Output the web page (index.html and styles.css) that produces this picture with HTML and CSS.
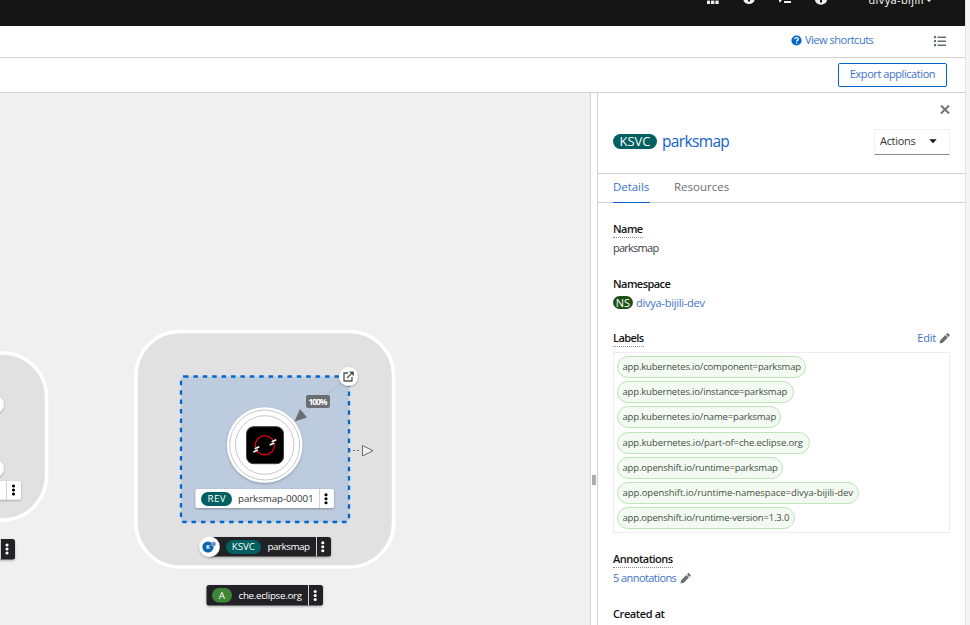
FILE: index.html
```html
<!DOCTYPE html>
<html lang="en">
<head>
<meta charset="utf-8">
<title>Topology</title>
<link rel="stylesheet" href="styles.css">
</head>
<body>
<div class="app">
  <div class="page">
    <header class="masthead">
      <svg class="masthead-icons" width="265" height="26" viewBox="700 0 265 26">
        <g fill="#f0f0f0">
          <path d="M707 0h3v4h-3zM711 0h3.400v4H711zM715.400 0h3.300v4h-3.300z"/>
          <path d="M743.500 0h11a5.500 4 0 0 1-11 0z"/>
          <path d="M779 0h3l-2 2.500-1-.8zM784 1h7v2h-7z"/>
          <path d="M815 0h12a6 4.700 0 0 1-12 0z"/>
          <path d="M927 0h4l-2 2z"/>
        </g>
        <path d="M707 .5h12" stroke="#151515" stroke-width=".6"/>
        <path d="M749 0v1.500M821 0v2.500" stroke="#151515" stroke-width="2"/>
        <text x="868.500" y="3.500" textLength="55" class="user">divya-bijili</text>
      </svg>
    </header>
    <div class="bar bar-shortcuts">
      <a class="link shortcuts"><svg width="11" height="11" viewBox="0 0 11 11"><circle cx="5.500" cy="5.500" r="5.100" fill="#06c"/><path d="M3.700 4.200c.2-2 3.600-2 3.600 0 0 1.200-1.700 1.200-1.700 2.400M5.600 7.500v1.300" fill="none" stroke="#fff" stroke-width="1.300"/></svg><span>View shortcuts</span></a>
      <svg class="list-icon" width="12" height="11" viewBox="0 0 12 11"><path d="M0 0h2v2.300H0zM0 4h2v2.300H0zM0 8h2v2.300H0zM3.500.5H12V2H3.500zM3.500 4.500H12V6H3.500zM3.500 8.500H12V10H3.500z" fill="#6a6e73"/></svg>
    </div>
    <div class="bar bar-export"><button class="export">Export application</button></div>
    <main class="content">
      <svg class="canvas" width="590" height="532" viewBox="0 93 590 532">
        <defs>
          <filter id="shadow" x="-20%" y="-20%" width="140%" height="150%"><feDropShadow dx="0" dy="1" stdDeviation="1" flood-color="#030303" flood-opacity=".3"/></filter>
          <g id="kebab"><circle cy="-4" r="1.550"/><circle r="1.550"/><circle cy="4" r="1.550"/></g>
        </defs>
        <rect x="-110" y="353" width="156.500" height="167" rx="44" class="group"/>
        <g filter="url(#shadow)" fill="#fff">
          <circle cx="-5" cy="404.500" r="9"/><circle cx="-5" cy="468.500" r="9"/>
          <rect x="-80" y="481" width="101" height="18.500" rx="2"/>
        </g>
        <path d="M6.500 481v18.500" stroke="#d2d2d2"/>
        <use href="#kebab" x="13.500" y="490"/>
        <g filter="url(#shadow)"><rect x="-80" y="539" width="95" height="20.500" rx="2.500" fill="#212427"/></g>
        <path d="M.5 539v20.500" stroke="#d2d2d2"/>
        <use href="#kebab" x="7" y="549" fill="#fff"/>

        <rect x="136" y="331.500" width="257.500" height="235.500" rx="44" class="group"/>
        <rect x="181" y="376.500" width="168" height="145.500" rx="3" class="service"/>
        <path d="M341 383L302 415" stroke="#b8bbbe"/>
        <path d="M294.500 421.500L300 409l7 8.500z" fill="#6a6e73"/>
        <rect x="306" y="395" width="24" height="13" rx="2" fill="#6a6e73"/>
        <text x="308.500" y="405" textLength="19" class="percent">100%</text>
        <circle cx="348.500" cy="376.500" r="9.500" fill="#fff" filter="url(#shadow)"/>
        <path d="M348 373h-4v8h8v-4M347 378l5.500-5.500" fill="none" stroke="#4f5255" stroke-width="1.300"/><path d="M349 371.500h4.800v4.800z" fill="#4f5255"/>
        <path d="M349 450.500h12" stroke="#6a6e73" stroke-dasharray="2 2"/>
        <path d="M362.500 445.500v10.500l10.500-5.300z" fill="#f0f0f0" stroke="#6a6e73"/>

        <g fill="#fff" stroke="#c8c8c8">
          <circle cx="264.700" cy="445" r="37.800" filter="url(#shadow)" stroke="none"/>
          <circle cx="264.700" cy="445" r="35"/>
          <circle cx="264.700" cy="445" r="29.300"/>
        </g>
        <rect x="246.500" y="426.700" width="37" height="37" rx="7" fill="#000" stroke="#3d3f42"/>
        <circle cx="264.800" cy="445.200" r="9.600" fill="none" stroke="#d8000c" stroke-width="1.400"/>
        <path d="M270.500 443l6.500-5v5zM253 447.500l6.500-.5-.5 4z" fill="#000"/>
        <path d="M271.700 441.700l4.600-2M269.700 445l4.600-2M254.700 448.800l4.600-2M253.300 452l4.600-2" stroke="#fff" stroke-width="1.700"/>

        <rect x="195.500" y="489" width="138.500" height="19" rx="2" fill="#fff" filter="url(#shadow)"/>
        <path d="M319.500 489v19" stroke="#d2d2d2"/>
        <rect x="201" y="492" width="31" height="14" rx="7" fill="#005f60"/>
        <text x="207.500" y="502" textLength="18" class="node on-dark">REV</text>
        <text x="238" y="502" textLength="75.500" class="node">parksmap-00001</text>
        <use href="#kebab" x="326" y="498.700"/>

        <rect x="209" y="537" width="122" height="19.500" rx="2.500" fill="#212427" filter="url(#shadow)"/>
        <path d="M316.500 537v19.500" stroke="#d2d2d2"/>
        <circle cx="209.500" cy="546.700" r="10.300" fill="#fff" filter="url(#shadow)"/>
        <circle cx="208" cy="547" r="5.600" fill="#0865ad"/><circle cx="213.500" cy="544" r="2.500" fill="#8ba9d7"/><circle cx="213.500" cy="544" r="1" fill="#416bb0"/>
        <text x="206" y="549.300" class="k-letter">K</text>
        <rect x="226" y="540" width="35" height="14" rx="7" fill="#005f60"/>
        <text x="231.800" y="550" textLength="23" class="node on-dark">KSVC</text>
        <text x="267.500" y="550" textLength="42.500" class="node on-dark">parksmap</text>
        <use href="#kebab" x="322.800" y="546.700" fill="#fff"/>

        <rect x="206.500" y="585" width="116.500" height="20.500" rx="2.500" fill="#212427" filter="url(#shadow)"/>
        <path d="M308.500 585v20.500" stroke="#d2d2d2"/>
        <rect x="212" y="588" width="20" height="14.500" rx="7.200" fill="#3e8635"/>
        <text x="218.800" y="599" class="node on-dark">A</text>
        <text x="238.500" y="599" textLength="63.500" class="node on-dark">che.eclipse.org</text>
        <use href="#kebab" x="315.200" y="595.500" fill="#fff"/>
      </svg>
      <div class="splitter"><i></i></div>
      <aside class="panel">
        <div class="close-row"><svg width="10" height="9" viewBox="0 0 10 9"><path d="M1 .5l8 8M9 .5l-8 8" stroke="#6a6e73" stroke-width="1.900"/></svg></div>
        <div class="heading">
          <span class="badge ksvc">KSVC</span><h1>parksmap</h1>
          <button class="actions">Actions<svg width="8" height="5" viewBox="0 0 8 5"><path d="M.3.300h7.400L4 4.300z" fill="#151515"/></svg></button>
        </div>
        <nav class="tabs"><a class="tab active">Details</a><a class="tab resources">Resources</a></nav>
        <dl class="details">
          <dt><span class="hint name">Name</span></dt>
          <dd class="value">parksmap</dd>
          <dt class="namespace">Namespace</dt>
          <dd class="ns-row"><span class="badge ns">NS</span><a class="link ns-link">divya-bijili-dev</a></dd>
          <dt class="labels-head"><span class="hint labels">Labels</span><a class="link edit">Edit<svg class="pencil" width="11" height="11" viewBox="0 0 11 11"><path d="M.5 10.500l.7-3.300L6.300 2l2.600 2.600-5.200 5.200zM7 1.400L8 .4c.4-.4.800-.4 1.200 0l1.300 1.300c.4.400.4.800 0 1.200l-1 1z" fill="#6a6e73"/></svg></a></dt>
          <dd class="chips">
            <span class="chip c1">app.kubernetes.io/component=parksmap</span>
            <span class="chip c2">app.kubernetes.io/instance=parksmap</span>
            <span class="chip c3">app.kubernetes.io/name=parksmap</span>
            <span class="chip c4">app.kubernetes.io/part-of=che.eclipse.org</span>
            <span class="chip c5">app.openshift.io/runtime=parksmap</span>
            <span class="chip c6">app.openshift.io/runtime-namespace=divya-bijili-dev</span>
            <span class="chip c7">app.openshift.io/runtime-version=1.3.0</span>
          </dd>
          <dt><span class="hint annotations">Annotations</span></dt>
          <dd class="annot-row"><a class="link annot-link">5 annotations</a><svg class="pencil" width="11" height="11" viewBox="0 0 11 11"><path d="M.5 10.500l.7-3.300L6.300 2l2.600 2.600-5.200 5.200zM7 1.400L8 .4c.4-.4.800-.4 1.200 0l1.300 1.300c.4.400.4.800 0 1.200l-1 1z" fill="#6a6e73"/></svg></dd>
          <dt class="created">Created at</dt>
        </dl>
      </aside>
    </main>
  </div>
  <div class="gutter"></div>
</div>
</body>
</html>
```
FILE: styles.css
```css
* { box-sizing: border-box; }
body { margin: 0; background: #fff; color: #151515; font: 11px/16px "Open Sans", "Noto Sans", sans-serif; overflow: hidden; }
svg { display: block; flex: none; }
button { font: inherit; border-radius: 0; padding: 0; }
.app { display: flex; width: 970px; height: 625px; overflow: hidden; }
.page { width: 965px; display: flex; flex-direction: column; }
.gutter { width: 5px; background: #f5f5f5; border-left: 1px solid #e3e3e3; }
.masthead { height: 26px; background: #151515; display: flex; justify-content: flex-end; flex: none; }
.user { font-size: 11px; fill: #fff; }
.bar { display: flex; align-items: center; justify-content: flex-end; border-bottom: 1px solid #d2d2d2; flex: none; }
.bar-shortcuts { height: 32px; padding: 0 19px 3px 0; gap: 60px; }
.link { color: #3d73cb; white-space: nowrap; }
.shortcuts { display: flex; align-items: center; gap: 3px; letter-spacing: -.48px; }
.shortcuts span { width: 69px; }
.list-icon { margin-top: 3px; }
.bar-export { height: 35px; padding-right: 18px; }
.export { width: 109px; height: 24px; border: 1px solid #06c; border-radius: 2px; background: #fff; color: #3d73cb; letter-spacing: -.43px; white-space: nowrap; line-height: 20px; padding-bottom: 2px; }
.content { display: flex; height: 532px; }
.canvas { background: #f0f0f0; }
.group { fill: #e1e1e1; stroke: #fff; stroke-width: 3.5; }
.service { fill: #bccbdd; stroke: #06c; stroke-width: 2.3; stroke-dasharray: 4.5 4.9; }
.percent { font-size: 8.5px; font-weight: 700; fill: #fff; }
.node { font-size: 9.8px; fill: #333; }
.on-dark { fill: #fff; }
.k-letter { font-size: 6px; font-weight: 700; fill: #fff; }
.splitter { width: 8px; border-left: 1px solid #d2d2d2; border-right: 1px solid #d2d2d2; padding: 382px 0 0 1px; }
.splitter i { display: block; width: 4px; height: 10px; background: #acacac; }
.panel { width: 367px; }
.close-row { height: 36px; padding: 12px 15px 0 0; display: flex; justify-content: flex-end; }
.heading { height: 45px; border-bottom: 1px solid #d2d2d2; display: flex; align-items: flex-start; padding: 0 15px; }
.badge { color: #fff; border-radius: 10px; text-align: center; flex: none; }
.ksvc { width: 44px; height: 15px; margin-top: 5px; background: #005f60; font-size: 13px; line-height: 15px; font-weight: 500; }
h1 { margin: 2px 0 0 5px; font-size: 15.5px; line-height: 20px; font-weight: 400; color: #1260ca; letter-spacing: -.65px; }
.actions { width: 76px; height: 26px; margin: 1px 0 0 auto; border: 1px solid #f0f0f0; border-bottom-color: #8a8d90; background: #fff; color: #333; display: flex; align-items: center; justify-content: space-between; padding: 0 12px 2px 5px; letter-spacing: -.3px; margin-top: 0; height: 26px; }
.tabs { height: 29px; border-bottom: 1px solid #d2d2d2; display: flex; gap: 24px; padding-left: 15px; }
.tab { width: 37px; height: 29px; line-height: 25px; font-size: 11.5px; white-space: nowrap; color: #6a6e73; }
.tab.active { color: #3d73cb; border-bottom: 1px solid #06c; letter-spacing: -.05px; }
.details { margin: 0; padding: 18px 15px 0; }
dt, dd { margin: 0; }
dt { height: 18px; color: #151515; font-weight: 600; letter-spacing: -.55px; }
.hint { display: inline-block; height: 17px; border-bottom: 1px dotted #8a8d90; }
.value { height: 37px; padding-top: 1px; color: #444; letter-spacing: -.75px; }
.ns-row { height: 36px; display: flex; align-items: flex-start; gap: 3px; padding-top: 1px; }
.ns { width: 20px; height: 13px; margin-top: 1px; background: #1e4f18; font-size: 11px; line-height: 13px; }
.ns-link { letter-spacing: -.25px; }
.labels-head { display: flex; justify-content: space-between; height: 22px; }
.edit { display: flex; align-items: center; gap: 3px; height: 16px; font-weight: 400; letter-spacing: -.2px; }
.chips { height: 181px; border: 1px solid #ededed; padding: 3px; display: flex; flex-direction: column; gap: 3.2px; }
.chip { height: 22px; flex: none; border: 1px solid #bde5b8; border-radius: 11px; background: #f3faf2; color: #445044; font-size: 9.5px; line-height: 19px; padding-left: 4.5px; white-space: nowrap; letter-spacing: -.17px; }
.c1 { width: 189px; }
.c2 { width: 177px; }
.c3 { width: 164px; }
.c4 { width: 193px; letter-spacing: -.12px; }
.c5 { width: 166px; }
.c6 { width: 242px; letter-spacing: -.05px; }
.c7 { width: 178px; }
.chips + dt { margin-top: 18px; }
.annotations { letter-spacing: -.5px; }
.annot-row { height: 37px; display: flex; gap: 4px; align-items: flex-start; padding-top: 1px; letter-spacing: -.57px; }
.annot-row .pencil { margin-top: 3px; }
.created { letter-spacing: -.4px; }
```
